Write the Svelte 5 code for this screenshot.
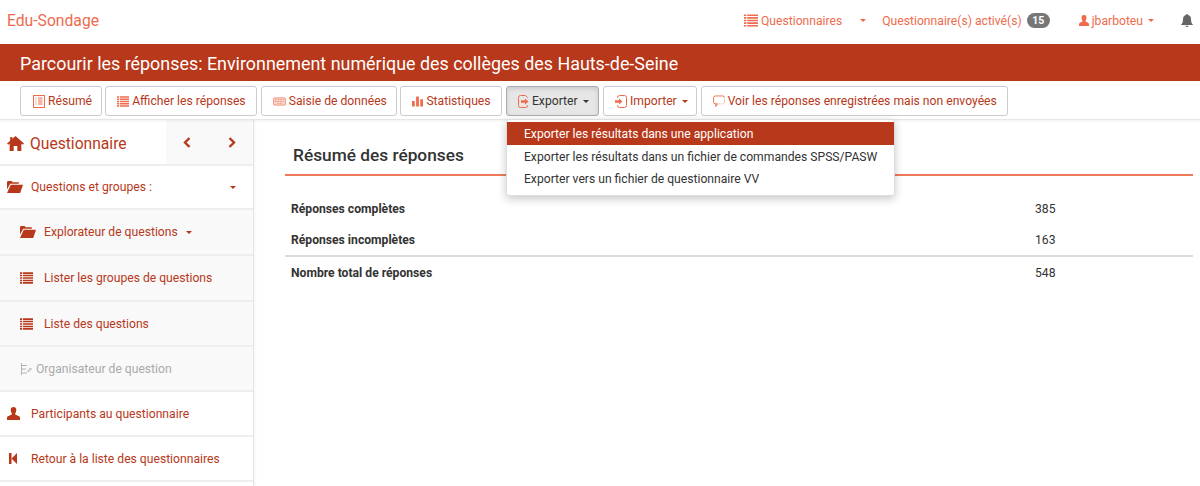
<script>
  const tools = [
    { label: 'Résumé', icon: 'summary' },
    { label: 'Afficher les réponses', icon: 'list' },
    { label: 'Saisie de données', icon: 'keyboard' },
    { label: 'Statistiques', icon: 'bars' },
    { label: 'Exporter', icon: 'export', caret: true, open: true },
    { label: 'Importer', icon: 'import', caret: true },
    { label: 'Voir les réponses enregistrées mais non envoyées', icon: 'bubble' }
  ];
  const menu = [
    'Exporter les résultats dans une application',
    'Exporter les résultats dans un fichier de commandes SPSS/PASW',
    'Exporter vers un fichier de questionnaire VV'
  ];
  const rows = [
    { label: 'Réponses complètes', value: 385 },
    { label: 'Réponses incomplètes', value: 163 },
    { label: 'Nombre total de réponses', value: 548, total: true }
  ];
</script>

{#snippet listIcon(w, h)}
  <svg width={w} height={h} viewBox="0 0 15 13" fill="currentColor" class="ic">
    <path d="M0 0h2.500v1.800H0zM3.500 0H15v1.800H3.500zM0 2.800h2.500v1.800H0zM3.500 2.800H15v1.800H3.500zM0 5.600h2.500v1.800H0zM3.500 5.600H15v1.800H3.500zM0 8.400h2.500v1.800H0zM3.500 8.400H15v1.800H3.500zM0 11.200h2.500V13H0zM3.500 11.200H15V13H3.500z" />
  </svg>
{/snippet}

{#snippet folderIcon()}
  <svg width="16" height="12" viewBox="0 0 16 12" fill="currentColor" class="ic">
    <path d="M0 1.200 .6 0h4l1 1.300h6.200v1.500H3.200L0 8.500zM3.800 3.800H16l-2.800 8.200H0z" />
  </svg>
{/snippet}

{#snippet toolIcon(name)}
  {#if name === 'summary'}
    <svg width="12" height="13" viewBox="0 0 12 13" class="ic" fill="none" stroke="currentColor">
      <rect x=".5" y=".5" width="11" height="12" />
      <path d="M2.500 3h1M5 3h4.500M2.500 5h1M5 5h4.500M2.500 7h1M5 7h4.500M2.500 9h1M5 9h4.500" />
    </svg>
  {:else if name === 'list'}
    {@render listIcon(12, 11)}
  {:else if name === 'keyboard'}
    <svg width="13" height="9" viewBox="0 0 14 10" class="ic" fill="#fbdcd3" stroke="currentColor" stroke-width=".8">
      <rect x=".5" y="1" width="13" height="8" rx="1" />
      <path d="M2 3h10M2 5h10M4 7h6" stroke-dasharray="1 .7" fill="none" />
    </svg>
  {:else if name === 'bars'}
    <svg width="11" height="11" viewBox="0 0 12 11" class="ic" fill="currentColor">
      <path d="M0 5h3v6H0zM4.500 0h3v11h-3zM9 3h3v8H9z" />
    </svg>
  {:else if name === 'export'}
    <svg width="11" height="13" viewBox="0 0 11 13" class="ic" fill="none" stroke="currentColor">
      <path d="M9.500 3V2.500l-2-2H2.500a2 2 0 0 0-2 2v8a2 2 0 0 0 2 2h5a2 2 0 0 0 2-2V10" />
      <path d="M3 5.200h4V3.500l3.500 3-3.500 3V7.800H3z" fill="currentColor" stroke="none" />
    </svg>
  {:else if name === 'import'}
    <svg width="12" height="13" viewBox="0 0 12 13" class="ic" fill="none" stroke="currentColor">
      <path d="M2.500 3V2.500a2 2 0 0 1 2-2h5a2 2 0 0 1 2 2v8a2 2 0 0 1-2 2h-5a2 2 0 0 1-2-2V10" />
      <path d="M0 5.200h4V3.500l3.500 3-3.500 3V7.800H0z" fill="currentColor" stroke="none" />
    </svg>
  {:else if name === 'bubble'}
    <svg width="12" height="13" viewBox="0 0 13 13" class="ic" fill="none" stroke="currentColor">
      <path d="M5 9H2.500a2 2 0 0 1-2-2V2.500a2 2 0 0 1 2-2h8a2 2 0 0 1 2 2" />
      <path d="M5 9 3 12V9" />
      <path d="M12.500 4.500v3M7 9h1.500M10.500 9h1" stroke-dasharray="1 1" />
    </svg>
  {/if}
{/snippet}

<div class="page">
  <nav class="nav">
    <span class="brand">Edu-Sondage</span>
    <div class="nav-right">
      <span class="nav-item q">{@render listIcon(14, 13)}Questionnaires</span>
      <i class="caret solo"></i>
      <span class="nav-item act">Questionnaire(s) activé(s)<b class="badge">15</b></span>
      <span class="nav-item user">
        <svg width="10" height="11" viewBox="0 0 10 11" fill="currentColor" class="ic"><path d="M5 0a2.500 2.500 0 0 1 2.500 2.800C7.500 4.500 6.500 6 6.300 6.500 8 7 10 7.600 10 9.500V11H0V9.500C0 7.600 2 7 3.700 6.500 3.500 6 2.500 4.500 2.500 2.800A2.500 2.500 0 0 1 5 0z" /></svg>
        jbarboteu<i class="caret"></i>
      </span>
      <svg class="bell" width="12" height="13" viewBox="0 0 12 13" fill="currentColor"><path d="M6 0a1 1 0 0 1 1 1.100C9 1.600 10 3.200 10 5c0 3 .6 4.500 2 5.700V11H0v-.3C1.400 9.500 2 8 2 5c0-1.800 1-3.400 3-3.900A1 1 0 0 1 6 0zM4.500 11.700h3A1.500 1.500 0 0 1 6 13a1.500 1.500 0 0 1-1.500-1.300z" /></svg>
    </div>
  </nav>

  <header class="title">Parcourir les réponses: Environnement numérique des collèges des Hauts-de-Seine</header>

  <div class="toolbar">
    {#each tools as t}
      <div class="tool-wrap">
        <button class="btn t-{t.icon}" class:open={t.open}>
          <span class="btn-ic">{@render toolIcon(t.icon)}</span>{t.label}{#if t.caret}<i class="caret"></i>{/if}
        </button>
        {#if t.open}
          <ul class="menu">
            {#each menu as m, i}
              <li class:active={i === 0}>{m}</li>
            {/each}
          </ul>
        {/if}
      </div>
    {/each}
  </div>

  <div class="main">
    <aside class="side">
      <div class="side-head">
        <div class="side-title">
          <svg width="17" height="15" viewBox="0 0 16 15" preserveAspectRatio="none" fill="currentColor"><path d="M8 0 16 7.500 14.800 8.700 13.500 7.500V15H9.700V10H6.300V15H2.500V7.500L1.200 8.700 0 7.500 3 4.700V1H5V2.800z" /></svg>
          <span>Questionnaire</span>
        </div>
        <div class="arrows">
          <svg width="8" height="11" viewBox="0 0 8 11" fill="none" stroke="currentColor" stroke-width="2.400"><path d="M6.500 1 2 5.500 6.500 10" /></svg>
          <svg width="8" height="11" viewBox="0 0 8 11" fill="none" stroke="currentColor" stroke-width="2.400"><path d="M1.500 1 6 5.500 1.500 10" /></svg>
        </div>
      </div>
      <div class="row r44">
        <span class="ri">{@render folderIcon()}</span><span>Questions et groupes :</span><i class="caret end"></i>
      </div>
      <div class="row sub h46">
        <span class="ri">{@render folderIcon()}</span><span>Explorateur de questions</span><i class="caret wide"></i>
      </div>
      <div class="row sub h46">
        <span class="ri">{@render listIcon(13, 12)}</span><span>Lister les groupes de questions</span>
      </div>
      <div class="row sub">
        <span class="ri">{@render listIcon(13, 12)}</span><span>Liste des questions</span>
      </div>
      <div class="row sub disabled">
        <svg class="org" width="11" height="12" viewBox="0 0 11 12" fill="none" stroke="currentColor" stroke-width=".9"><path d="M.5 0v12M.5 2.500H6M.5 6H5M.5 10H6M8 8.500l2.500-2.500-1-1-2.500 2.500v1z" /></svg>
        <span>Organisateur de question</span>
      </div>
      <div class="row">
        <span class="ri">
          <svg width="13" height="13" viewBox="0 0 13 13" fill="currentColor" class="ic"><path d="M6.500 0C8.300 0 9.300 1.300 9.300 3c0 1.500-.8 3-1.300 3.700.2.800 1 1.200 2.300 1.700 1.500.5 2.700 1 2.700 2.100V13H0v-2.500c0-1.100 1.200-1.600 2.700-2.100C4 7.900 4.800 7.500 5 6.700 4.500 6 3.700 4.500 3.700 3 3.700 1.300 4.700 0 6.500 0z" /></svg>
        </span><span>Participants au questionnaire</span>
      </div>
      <div class="row">
        <span class="ri back">
          <svg width="8" height="11" viewBox="0 0 8 11" fill="currentColor" class="ic"><path d="M0 0h2.500v11H0zM2.500 5.500 8 0v11z" /></svg>
        </span><span>Retour à la liste des questionnaires</span>
      </div>
    </aside>

    <section class="content">
      <h2>Résumé des réponses</h2>
      <table>
        <tbody>
          {#each rows as r}
            <tr class:total={r.total}><th>{r.label}</th><td>{r.value}</td></tr>
          {/each}
        </tbody>
      </table>
    </section>
  </div>
</div>

<style>
  :global(body) { margin: 0; background: #fff; font-family: Roboto, "Liberation Sans", sans-serif; }
  .page { width: 1200px; height: 486px; overflow: hidden; }
  .ic { display: block; }
  .caret { display: inline-block; width: 0; height: 0; border-left: 3.500px solid transparent; border-right: 3.500px solid transparent; border-top: 3.500px solid currentColor; margin-left: 5px; vertical-align: 2px; }

  .nav { height: 44px; display: flex; align-items: center; justify-content: space-between; padding: 0 7px 3px 7px; box-sizing: border-box; color: #ee6b4d; font-size: 12.150px; }
  .brand { font-size: 15.700px; }
  .nav-right { display: flex; align-items: center; }
  .nav-item { display: flex; align-items: center; }
  .q .ic { margin-right: 3px; }
  .solo { margin: 0 0 0 18px; }
  .act { margin-left: 16px; }
  .badge { margin-left: 5px; background: #777; color: #fff; font-size: 10.500px; font-weight: 700; border-radius: 8px; width: 23px; height: 15px; line-height: 15px; text-align: center; }
  .user { margin-left: 29px; }
  .user .ic { margin-right: 3px; }
  .bell { margin-left: 27px; color: #666; }

  .title { height: 37px; background: #b7381a; color: #fff; font-size: 17.900px; line-height: 39px; padding-left: 20px; overflow: hidden; }

  .toolbar { height: 39px; box-sizing: border-box; display: flex; gap: 3.600px; padding: 5px 0 0 20px; border-bottom: 1px solid #e6e6e6; box-shadow: 0 1px 2px rgba(0,0,0,.06); position: relative; z-index: 2; }
  .tool-wrap { position: relative; }
  .btn { height: 30px; box-sizing: border-box; display: flex; align-items: center; background: #fff; border: 1px solid #ccc; border-radius: 3px; padding: 0 0 0 11px; color: #b7381a; font: 12.150px Roboto, sans-serif; white-space: nowrap; }
  .t-summary { width: 81.600px; padding-left: 12px; }
  .t-list { width: 152px; }
  .t-keyboard { width: 136px; }
  .t-bars { width: 102px; }
  .t-export { width: 93.500px; }
  .t-import { width: 94px; }
  .t-bubble { width: 307px; }
  .btn-ic { color: #ee6b4d; margin-right: 3px; }
  .btn.open { background: #e6e6e6; border-color: #adadad; color: #333; box-shadow: inset 0 2px 4px rgba(0,0,0,.12); }
  .menu { position: absolute; left: 0; top: 33px; margin: 0; padding: 2px 0 5px; list-style: none; width: 389px; box-sizing: border-box; background: #fff; border: 1px solid #ddd; border-radius: 3px; box-shadow: 0 3px 10px rgba(0,0,0,.22); font-size: 12.150px; color: #333; z-index: 5; }
  .menu li { height: 22.500px; line-height: 24px; padding-left: 17px; white-space: nowrap; }
  .menu li.active { background: #b7381a; color: #fff; }

  .main { display: flex; height: 366px; }
  .side { width: 254px; flex: none; box-sizing: border-box; border-right: 1px solid #e6e6e6; box-shadow: 1px 0 3px rgba(0,0,0,.05); color: #b7381a; font-size: 12.150px; }
  .side-head { height: 46px; display: flex; border-bottom: 2px solid #eee; box-sizing: border-box; }
  .side-title { flex: 1; display: flex; align-items: center; gap: 6px; padding: 2px 0 0 7px; font-size: 15.650px; }
  .arrows { width: 87px; background: #f9f9f9; display: flex; align-items: center; justify-content: space-between; padding: 0 17px; box-sizing: border-box; }
  .row { display: flex; align-items: center; height: 45px; box-sizing: border-box; border-bottom: 2px solid #eee; padding-left: 7px; position: relative; }
  .r44 { height: 44px; }
  .h46 { height: 46px; }
  .ri { width: 24px; flex: none; }
  .end { position: absolute; right: 17px; margin: 0; }
  .wide { margin-left: 8px; }
  .sub { background: #f9f9f9; padding-left: 20px; }
  .disabled { color: #aaa; }
  .org { margin: 0 4px 0 1px; }
  .back { padding-left: 2px; width: 22px; }

  .content { flex: 1; padding: 22px 7px 0 31px; }
  h2 { margin: 0; padding: 3px 0 0 8px; height: 34px; box-sizing: border-box; border-bottom: 2px solid #ee7a5c; font-size: 17.300px; font-weight: 500; color: #333; line-height: 21px; }
  table { width: 100%; border-collapse: collapse; margin-top: 17px; font-size: 12.150px; color: #333; }
  th { text-align: left; font-weight: 700; padding: 0 0 0 6px; height: 31px; }
  td { width: 158px; padding: 0; height: 31px; }
  tr.total th, tr.total td { border-top: 2px solid #ddd; height: 32px; }
</style>
